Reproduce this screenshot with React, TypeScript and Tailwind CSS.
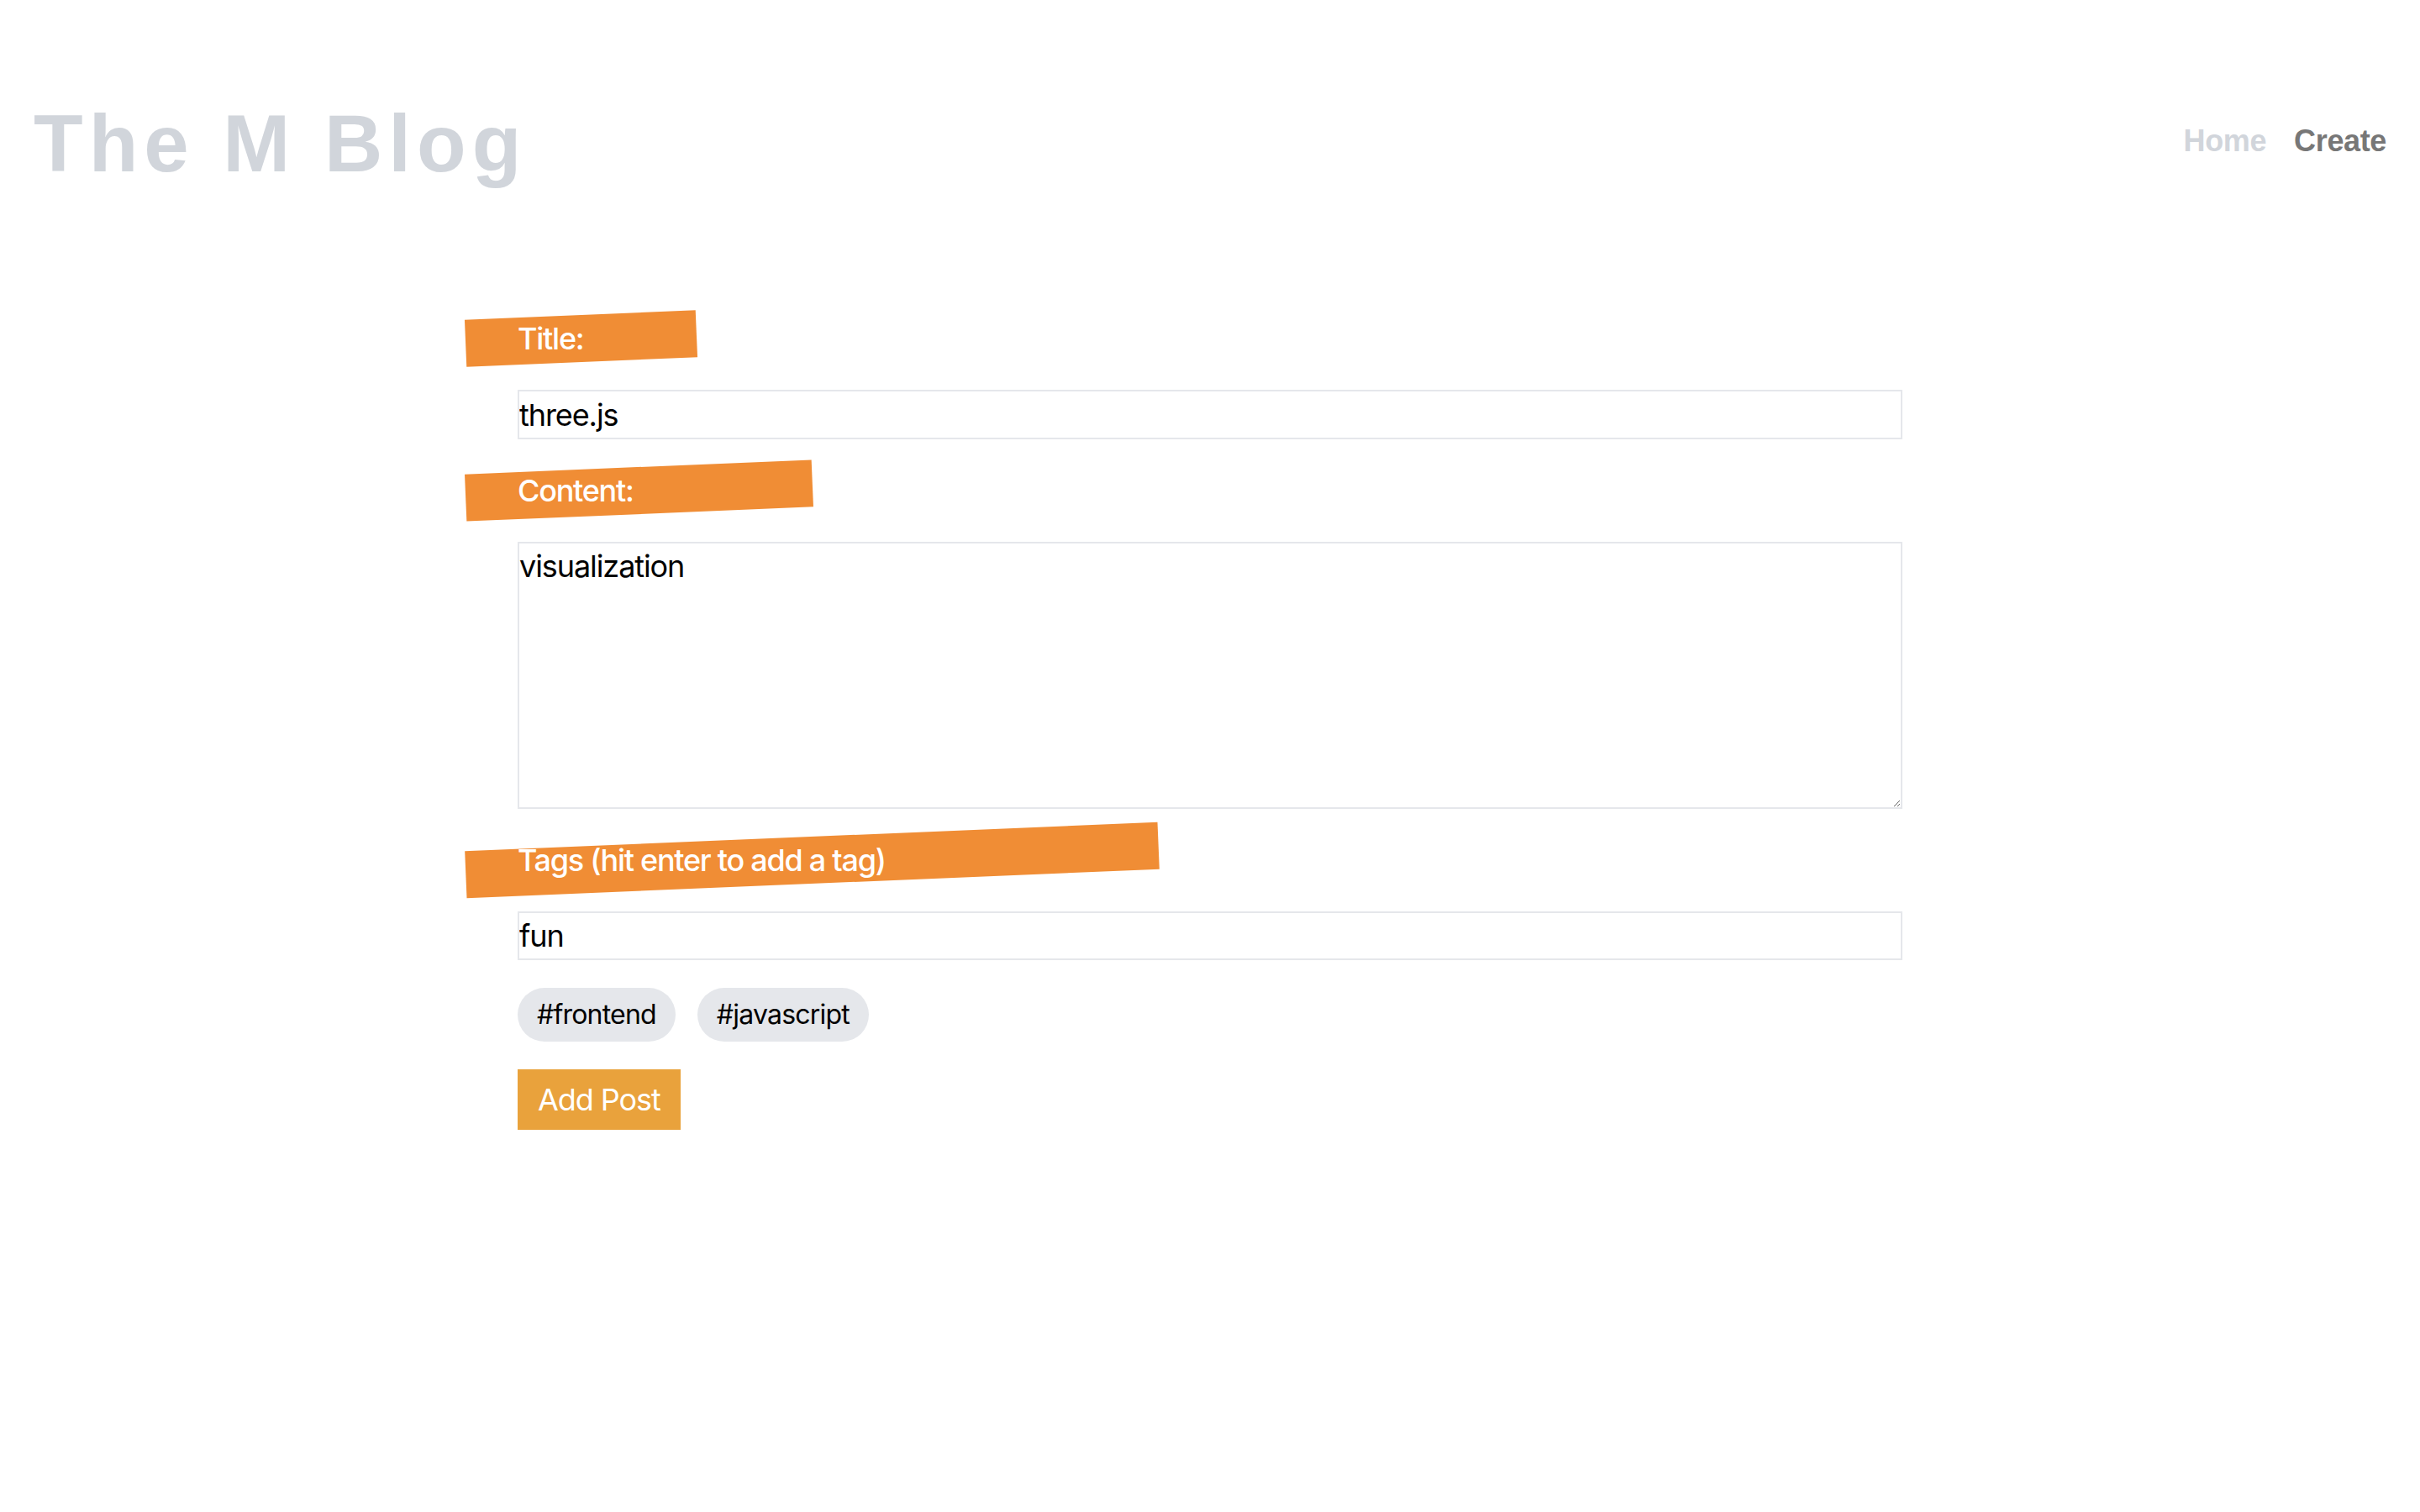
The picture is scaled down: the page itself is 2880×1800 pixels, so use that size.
import React from "react";

const sans = "font-['Inter','Noto_Sans',sans-serif]";

const Label = ({ text, width }: { text: string; width: string }) => {
  return (
    <div className="relative h-[56px] flex items-center">
      {/* the slanted orange strip behind the label text */}
      <div
        className={`absolute left-[-62px] top-0 h-[56px] ${width} bg-[#f08d35] rotate-[-2.4deg]`}
      />
      <span className="relative text-[36px] font-medium text-white tracking-[-0.035em]">
        {text}
      </span>
    </div>
  );
};

const Tag = ({ label }: { label: string }) => {
  return (
    <div className="h-[64px] px-[23px] rounded-full bg-[#e5e7eb] flex items-center text-[32px] text-black tracking-[-0.025em]">
      {label}
    </div>
  );
};

export default function App() {
  return (
    <div className={`min-h-[1800px] bg-white ${sans}`}>
      <header className="flex items-center justify-between pl-[40px] pr-[40px] pt-[123px]">
        <h1 className="font-['Liberation_Sans',Arial,sans-serif] font-bold text-[96px] leading-none tracking-[7px] text-[#d1d5db]">
          The M Blog
        </h1>
        <nav className="flex items-center gap-[33px] pb-[7px] font-['Liberation_Sans',Arial,sans-serif] font-bold text-[36px] leading-[56px] tracking-[-0.01em]">
          <a className="text-[#d1d5db]">Home</a>
          <a className="text-[#777777]">Create</a>
        </nav>
      </header>

      <form
        className="mx-auto mt-[156px] w-[1648px] flex flex-col gap-[33px]"
        onSubmit={(e) => e.preventDefault()}
      >
        <Label text="Title:" width="w-[275px]" />
        <input
          type="text"
          defaultValue="three.js"
          className="h-[59px] border-2 border-[#e5e7eb] px-0 text-[36px] text-black tracking-[-0.03em] outline-none"
        />

        <Label text="Content:" width="w-[413px]" />
        <textarea
          defaultValue="visualization"
          className="h-[318px] border-2 border-[#e5e7eb] px-0 py-0 text-[36px] text-black tracking-[-0.03em] outline-none"
        />

        <Label text="Tags (hit enter to add a tag)" width="w-[825px]" />
        <input
          type="text"
          defaultValue="fun"
          className="h-[58px] border-2 border-[#e5e7eb] px-0 text-[36px] text-black tracking-[-0.03em] outline-none"
        />

        <div className="flex gap-[26px]">
          <Tag label="#frontend" />
          <Tag label="#javascript" />
        </div>

        <button className="self-start h-[72px] px-[24px] bg-[#e9a23c] text-white text-[36px] tracking-[-0.03em]">
          Add Post
        </button>
      </form>
    </div>
  );
}
